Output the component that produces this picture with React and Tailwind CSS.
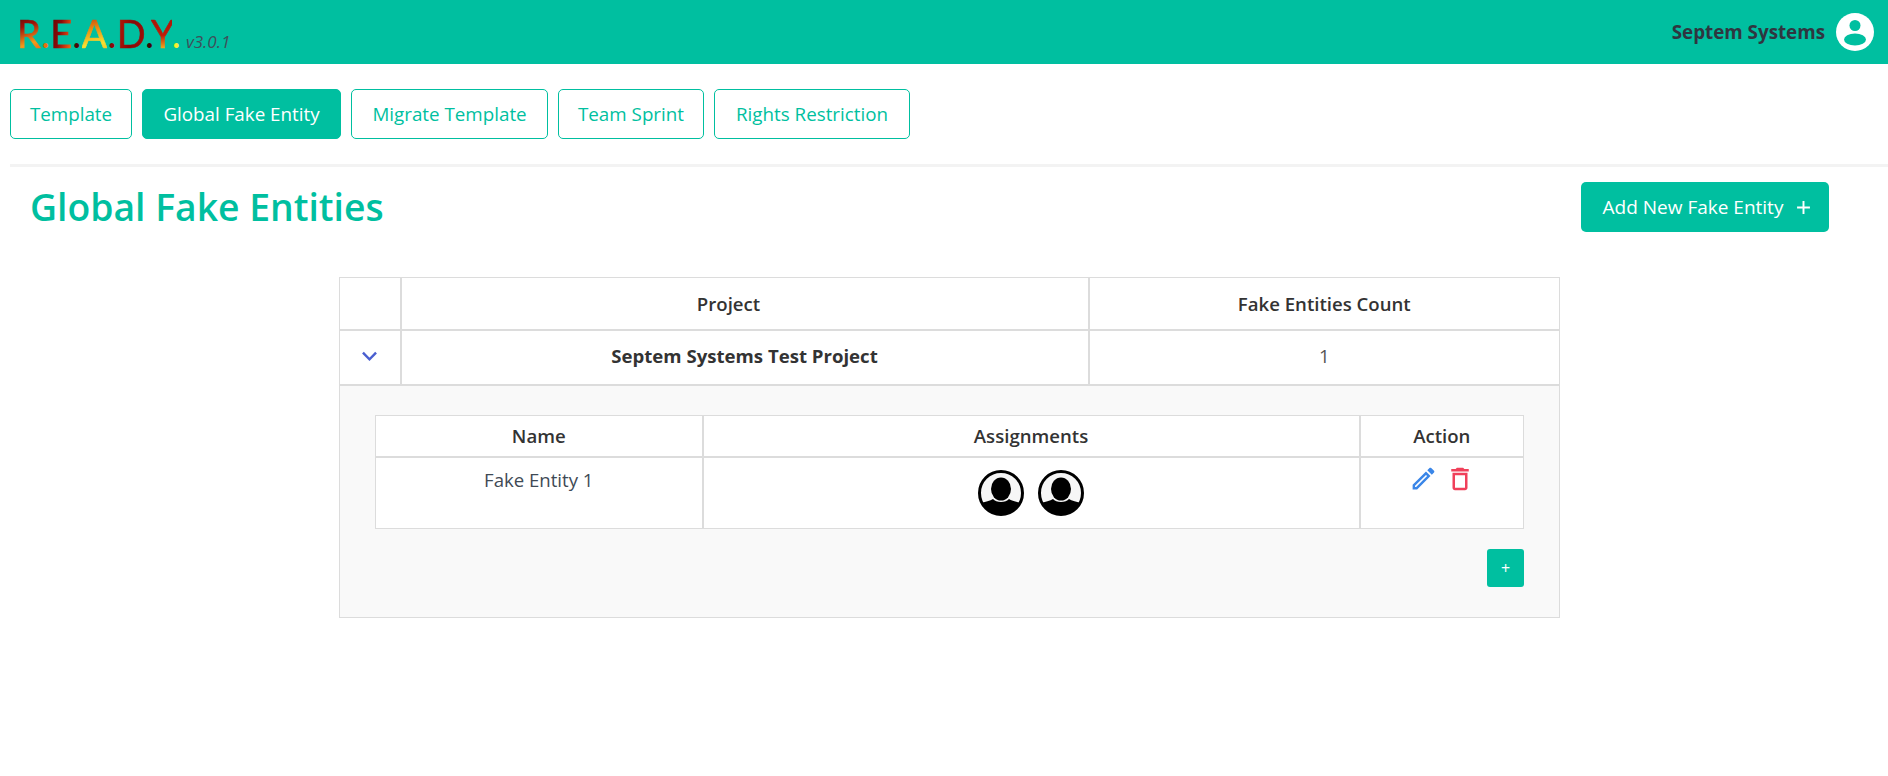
import React from "react";

const fire = [
  "bg-[linear-gradient(160deg,#3a0505_0%,#a01208_35%,#f59a1a_70%,#e84a10_100%)]",
  "bg-[linear-gradient(100deg,#5a0505_0%,#8a0a08_45%,#d8400f_75%,#f08a1a_100%)]",
  "bg-[linear-gradient(170deg,#b01a08_0%,#e8880f_40%,#f8e030_72%,#e8b020_100%)]",
  "bg-[linear-gradient(100deg,#c01c08_0%,#8a0806_50%,#a01008_100%)]",
  "bg-[linear-gradient(175deg,#a01008_0%,#c01c08_55%,#f0a018_80%,#f8e030_100%)]",
];

function Letter({ c, i, dot }) {
  return (
    <>
      <span className={`bg-clip-text text-transparent [-webkit-text-stroke:0.6px_transparent] ${fire[i]}`}>{c}</span>
      <span className={dot}>.</span>
    </>
  );
}

function Tab({ children, active, width }) {
  return (
    <button
      className={
        active
          ? `h-[50px] ${width} rounded-[5px] border border-[#00bfa0] bg-[#00bfa0] text-white text-[18.8px]`
          : `h-[50px] ${width} rounded-[5px] border border-[#00bfa0] bg-white text-[#00bfa0] text-[18.8px]`
      }
    >
      {children}
    </button>
  );
}

function Person({ id }) {
  return (
    <svg viewBox="0 0 46 46" className="w-[46px] h-[46px]">
      <defs>
        <clipPath id={id}><circle cx="23" cy="23" r="21" /></clipPath>
      </defs>
      <circle cx="23" cy="23" r="21.5" fill="#f6f6f6" stroke="#000" strokeWidth="3" />
      <g clipPath={`url(#${id})`}>
        <ellipse cx="23" cy="19" rx="10" ry="11.5" fill="#000" />
        <path d="M0 46 V34 C6 32 12 31 15 29 C18 33 28 33 31 29 C34 31 40 32 46 34 V46 Z" fill="#000" />
      </g>
    </svg>
  );
}

const head = "border-[#dcdcdc] font-semibold text-[18.6px] text-[#333] text-center align-middle";

export default function App() {
  return (
    <div className="min-h-[776px] bg-white text-[#333] font-['Open_Sans','Noto_Sans',sans-serif]">
      <header className="h-16 bg-[#00bfa0] flex items-center justify-between pl-[17px] pr-[14px]">
        <div className="flex items-baseline mt-[4px]">
          <span className="text-[38px] leading-none tracking-[0.2px] font-['Lato',sans-serif]">
            <Letter c="R" i={0} dot="text-[#e8700f]" />
            <Letter c="E" i={1} dot="text-[#4a0505]" />
            <Letter c="A" i={2} dot="text-[#8a0a08]" />
            <Letter c="D" i={3} dot="text-[#3a0505]" />
            <Letter c="Y" i={4} dot="text-[#f8f030]" />
          </span>
          <span className="italic text-[17px] text-[#3f4f5a] ml-[5px]">v3.0.1</span>
        </div>
        <div className="flex items-center gap-[11px]">
          <span className="text-[18.8px] font-bold text-[#2f3640]">Septem Systems</span>
          <svg viewBox="0 0 38 38" className="w-[38px] h-[38px]">
            <circle cx="19" cy="19" r="19" fill="#fff" />
            <circle cx="19" cy="12.5" r="5.5" fill="#00bfa0" />
            <ellipse cx="19" cy="26.5" rx="11" ry="6" fill="#00bfa0" />
          </svg>
        </div>
      </header>

      <nav className="flex gap-[10px] pl-[10px] pt-[25px] pb-[25px]">
        <Tab width="w-[122px]">Template</Tab>
        <Tab active width="w-[199px]">Global Fake Entity</Tab>
        <Tab width="w-[197px]">Migrate Template</Tab>
        <Tab width="w-[146px]">Team Sprint</Tab>
        <Tab width="w-[196px]">Rights Restriction</Tab>
      </nav>

      <div className="ml-[10px] h-[3px] bg-[#f3f3f3]" />

      <div className="flex items-center justify-between pl-[30px] pr-[59px] pt-[15px]">
        <h1 className="text-[37.3px] leading-[50px] font-semibold text-[#00bfa0]">Global Fake Entities</h1>
        <button className="h-[50px] w-[248px] flex items-center justify-center gap-[13px] pl-[4px] rounded-[5px] bg-[#00bfa0] text-white text-[19px]">
          Add New Fake Entity
          <svg viewBox="0 0 14 14" className="w-[15px] h-[15px]" stroke="#fff" strokeWidth="1.8"><path d="M7 1v12M1 7h12" /></svg>
        </button>
      </div>

      <div className="flex justify-center pt-[45px] pl-[11px]">
        <table className="w-[1221px] table-fixed border-collapse">
          <colgroup>
            <col className="w-[61px]" />
            <col className="w-[688px]" />
            <col />
          </colgroup>
          <tbody>
            <tr className="h-[52px]">
              <th className={`${head} border-t border-l border-r-2 border-b-2`}></th>
              <th className={`${head} border-t border-r-2 border-b-2 pt-[2px] pr-[32px]`}>Project</th>
              <th className={`${head} border-t border-r border-b-2 pt-[2px]`}>Fake Entities Count</th>
            </tr>
            <tr className="h-[55px]">
              <td className="border-l border-r-2 border-b-2 border-[#dcdcdc] text-center align-middle">
                <svg viewBox="0 0 16 10" className="w-[15px] h-[10px] block mx-auto mb-[2px]" fill="none" stroke="#4a5fd0" strokeWidth="2.6"><path d="M1 1.5l7 7 7-7" /></svg>
              </td>
              <td className="border-r-2 border-b-2 border-[#dcdcdc] text-center font-bold text-[18.6px] pb-[2px]">Septem Systems Test Project</td>
              <td className="border-r border-b-2 border-[#dcdcdc] text-center text-[18.6px] text-[#555] pb-[2px]">1</td>
            </tr>
            <tr>
              <td colSpan={3} className="bg-[#f9f9f9] border-l border-r border-b border-[#dcdcdc] px-[35px] pt-[29px] pb-[30px]">
                <table className="w-full table-fixed border-collapse bg-white">
                  <colgroup>
                    <col className="w-[327px]" />
                    <col className="w-[657px]" />
                    <col />
                  </colgroup>
                  <tbody>
                    <tr className="h-[42px]">
                      <th className={`${head} border-t border-l border-r-2 border-b-2 pt-[1px]`}>Name</th>
                      <th className={`${head} border-t border-r-2 border-b-2 pt-[1px]`}>Assignments</th>
                      <th className={`${head} border-t border-r border-b-2 pt-[1px]`}>Action</th>
                    </tr>
                    <tr className="h-[71px]">
                      <td className="border-l border-r-2 border-b border-[#dcdcdc] text-center align-top pt-[8px] text-[18.6px] text-[#3f4a55]">Fake Entity 1</td>
                      <td className="border-r-2 border-b border-[#dcdcdc] align-top pt-[12px]">
                        <div className="flex justify-center gap-[14px]">
                          <Person id="pa" />
                          <Person id="pb" />
                        </div>
                      </td>
                      <td className="border-r border-b border-[#dcdcdc] align-top pt-[6px]">
                        <div className="flex justify-center gap-[7px] pl-[1px]">
                          <svg viewBox="0 0 24 24" className="w-[29px] h-[29px]" fill="#3a86e8">
                            <path d="M14.06 9.02l.92.92L5.92 19H5v-.92l9.06-9.06M17.66 3c-.25 0-.51.1-.7.29l-1.83 1.83 3.75 3.75 1.83-1.83c.39-.39.39-1.02 0-1.41l-2.34-2.34c-.2-.2-.45-.29-.71-.29zm-3.6 3.19L3 17.25V21h3.75L17.81 9.94l-3.75-3.75z" />
                          </svg>
                          <svg viewBox="0 0 24 24" className="w-[30px] h-[30px]" fill="#f0405a">
                            <path d="M6 19c0 1.1.9 2 2 2h8c1.1 0 2-.9 2-2V7H6v12zM8 9h8v10H8V9zm7.5-5l-1-1h-5l-1 1H5v2h14V4z" />
                          </svg>
                        </div>
                      </td>
                    </tr>
                  </tbody>
                </table>
                <div className="flex justify-end pt-[20px]">
                  <button className="w-[37px] h-[38px] rounded-[3px] bg-[#00bfa0] text-white text-[16px] flex items-center justify-center">+</button>
                </div>
              </td>
            </tr>
          </tbody>
        </table>
      </div>
    </div>
  );
}
